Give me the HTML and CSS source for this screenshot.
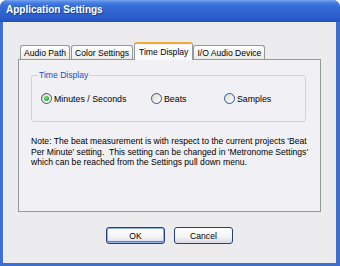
FILE: index.html
```html
<!DOCTYPE html>
<html lang="en">
<head>
    <meta charset="UTF-8">
    <title>Application Settings</title>
    <link rel="stylesheet" href="styles.css">
</head>
<body>
    <div class="window">
        <div class="titlebar">Application Settings</div>
        <div class="client">
            <div class="tabs">
                <div class="tab">Audio Path</div>
                <div class="tab">Color Settings</div>
                <div class="tab active">Time Display</div>
                <div class="tab">I/O Audio Device</div>
            </div>
            <div class="panel">
                <fieldset class="group">
                    <legend>Time Display</legend>
                    <div class="radios">
                        <label class="radio checked"><span class="dot"></span>Minutes / Seconds</label>
                        <label class="radio"><span class="dot"></span>Beats</label>
                        <label class="radio"><span class="dot"></span>Samples</label>
                    </div>
                </fieldset>
                <p class="note">Note: The beat measurement is with respect to the current projects 'Beat Per Minute' setting.&nbsp; This setting can be changed in 'Metronome Settings' which can be reached from the Settings pull down menu.</p>
            </div>
            <div class="buttons">
                <button class="default">OK</button>
                <button>Cancel</button>
            </div>
        </div>
    </div>
</body>
</html>
```

FILE: styles.css
```css
* {
    margin: 0;
    padding: 0;
    box-sizing: border-box;
}

body {
    font-family: "Liberation Sans", Arial, sans-serif;
    font-size: 8.6px;
    color: #000;
    background-color: #fff;
}

.window {
    width: 340px;
    height: 266px;
    display: flex;
    flex-direction: column;
    background-color: #3f6fd2;
    border-radius: 7px 7px 0 0;
    overflow: hidden;
}

.titlebar {
    height: 22px;
    padding: 4px 0 0 6px;
    font-size: 10px;
    font-weight: bold;
    color: #fff;
    text-shadow: 1px 1px 0 #1c3f95;
    background: linear-gradient(#7aa6f0 0, #4f86e6 2px, #3a70da 5px, #2f62cf 12px, #2b5ccb 18px, #2452bd 22px);
}

.client {
    flex: 1;
    margin: 0 4px 3px 3px;
    padding: 21px 15px 0 14px;
    background-color: #ecebee;
    border-left: 1px solid #f6f5f8;
}

/* Tab strip */
.tabs {
    display: flex;
    align-items: flex-end;
    height: 16px;
    padding-left: 2px;
    position: relative;
    z-index: 1;
}

.tab {
    height: 14px;
    padding: 1px 3px 0;
    border: 1px solid #919b9c;
    border-bottom: none;
    border-radius: 3px 3px 0 0;
    background: linear-gradient(#ffffff, #ecebe6);
    white-space: nowrap;
    line-height: 12px;
}

.tab + .tab {
    margin-left: 1px;
}

.tab.active {
    height: 18px;
    margin: 0 -2px -1px 1px;
    padding: 2px 4px 0;
    border-top: 2px solid #f4a637;
    background: #fbfbfd;
    position: relative;
}

.tab.active + .tab {
    margin-left: 2px;
}

.panel {
    height: 153px;
    padding: 10px 14px 0 12px;
    border: 1px solid #919b9c;
    background-color: #f1f0f4;
}

/* Group box */
.group {
    height: 52px;
    padding: 0 6px;
    border: 1px solid #d3d1d6;
    border-radius: 3px;
}

.group legend {
    padding: 0 1px;
    color: #1f4fbf;
    line-height: 10px;
}

.radios {
    display: grid;
    grid-template-columns: 110px 73px auto;
    margin: 13px 0 0 3px;
}

.radio {
    display: flex;
    align-items: center;
    gap: 2px;
    font-size: 8.8px;
}

.radio .dot {
    width: 11px;
    height: 11px;
    border: 1px solid #2e5a86;
    border-radius: 50%;
    background: linear-gradient(135deg, #d9d8d2, #ffffff);
    display: flex;
    align-items: center;
    justify-content: center;
}

.radio.checked .dot::after {
    content: "";
    width: 5px;
    height: 5px;
    border-radius: 50%;
    background: radial-gradient(circle at 35% 35%, #6fe06f, #1f9a1f);
}

.note {
    margin: 14px -6px 0 0;
    line-height: 10.5px;
}

/* Dialog buttons */
.buttons {
    display: flex;
    justify-content: center;
    gap: 9px;
    margin-top: 15px;
}

button {
    width: 59px;
    height: 17px;
    font-family: "Liberation Sans", Arial, sans-serif;
    font-size: 8.6px;
    color: #000;
    border: 1px solid #24417a;
    border-radius: 3px;
    background: linear-gradient(#ffffff, #f3f3f6 60%, #d8d9e4);
}

button.default {
    box-shadow: inset 0 0 0 1px #8fb0ea, inset 0 -1px 0 1px #5b84d8;
}
```
